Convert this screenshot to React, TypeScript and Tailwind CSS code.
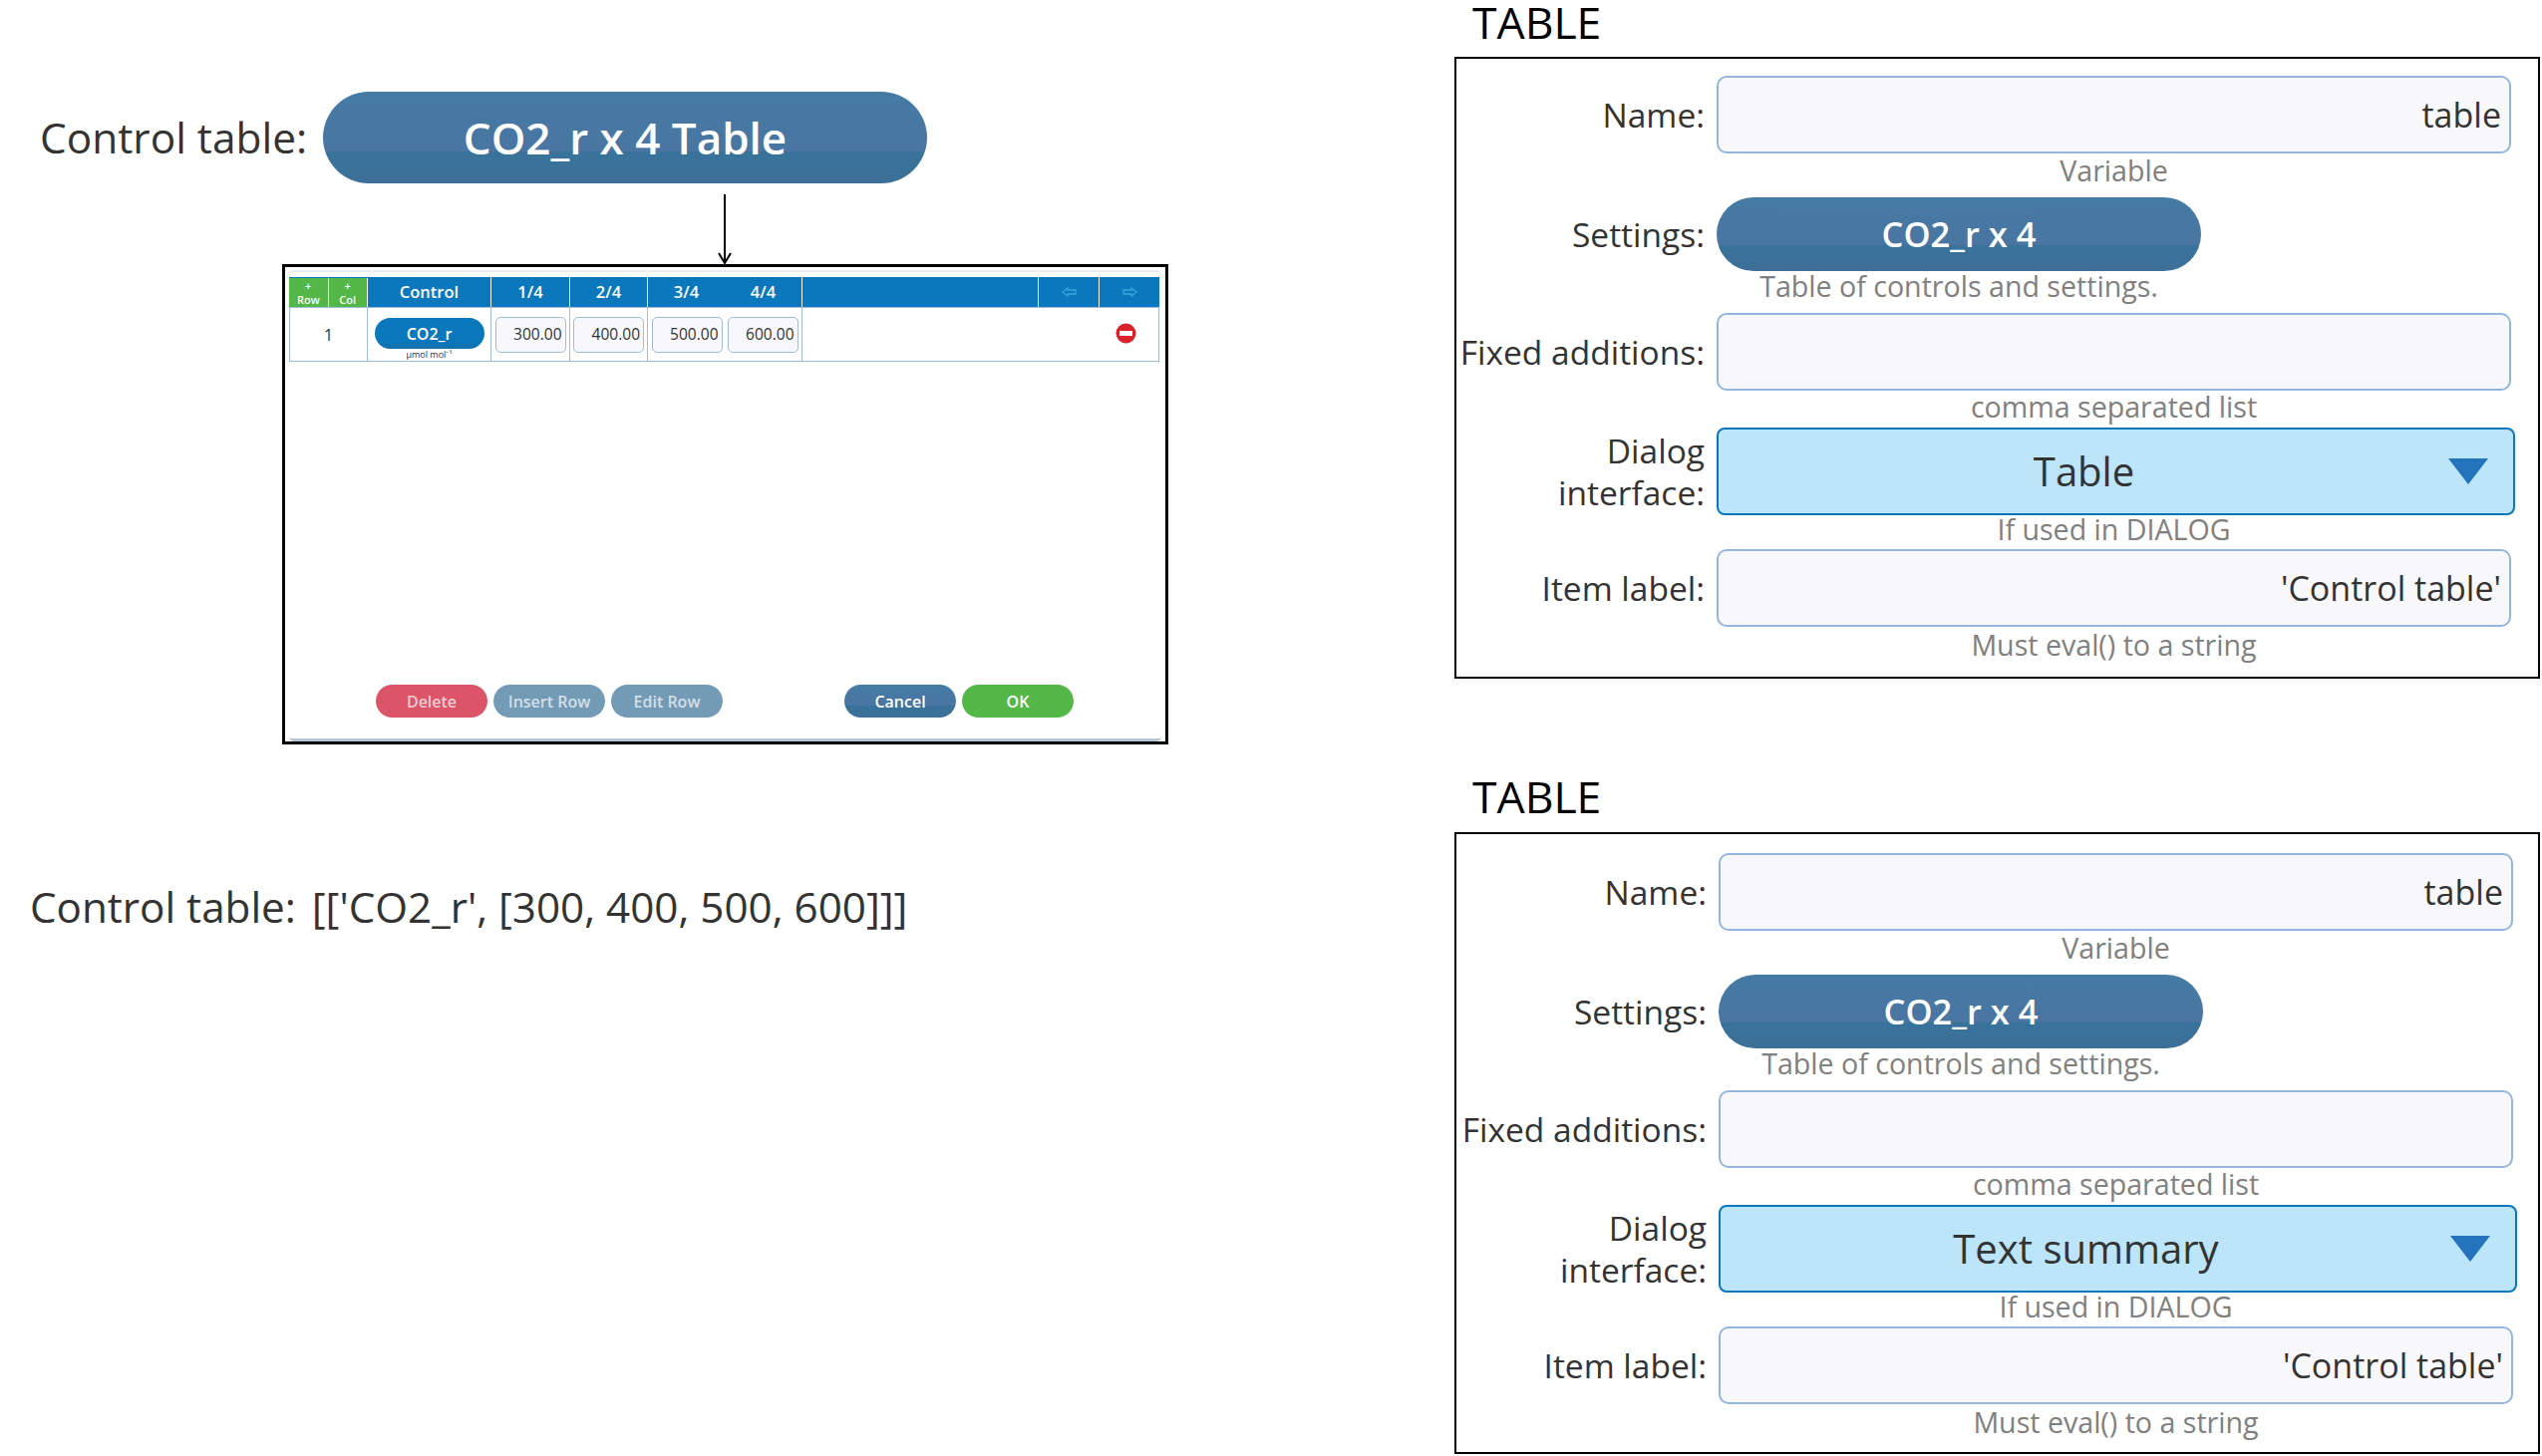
import React from 'react';

const steelPill = 'bg-[linear-gradient(#447ba4_0%,#4a75a2_65%,#38739b_65%,#3d6f98_100%)]';

const Hint: React.FC<{ text: string; className: string }> = ({ text, className }) => (
    <div className={`flex items-center justify-center text-[28.6px] leading-none text-[#808080] ${className}`}>
        {text}
    </div>
);

const FormRow: React.FC<{ label: React.ReactNode; children: React.ReactNode }> = ({ label, children }) => (
    <div className="flex items-center">
        <div className="w-[261px] shrink-0 pr-[12px] text-right text-[33.5px] font-medium leading-[42px] text-[#333]">{label}</div>
        {children}
    </div>
);

const TextField: React.FC<{ value?: string }> = ({ value }) => (
    <div className="flex h-[78px] w-[797px] items-center justify-end rounded-[10px] border-2 border-[#94b6dd] bg-[#f8f8fb] px-[8px] text-[34px] font-medium text-[#333]">
        {value}
    </div>
);

const TablePanel: React.FC<{ dialog: string; className: string }> = ({ dialog, className }) => (
    <section className={className}>
        <div className="flex h-[624px] w-[1089px] flex-col border-2 border-black bg-white">
            <FormRow label="Name:"><TextField value="table" /></FormRow>
            <div className="pl-[261px]"><Hint text="Variable" className="h-[44px] w-[797px] pb-[10px]" /></div>
            <FormRow label="Settings:">
                <div className={`flex h-[74px] w-[486px] items-center justify-center rounded-[37px] text-[34.5px] font-semibold text-white ${steelPill}`}>
                    CO2_r x 4
                </div>
            </FormRow>
            <div className="pl-[261px]"><Hint text="Table of controls and settings." className="h-[42px] w-[486px] pb-[12px]" /></div>
            <FormRow label="Fixed additions:"><TextField /></FormRow>
            <div className="pl-[261px]"><Hint text="comma separated list" className="h-[37px] w-[797px] pb-[4px]" /></div>
            <FormRow label={<>Dialog<br />interface:</>}>
                <div className="relative flex h-[88px] w-[801px] items-center justify-center rounded-[8px] border-2 border-[#0b78be] bg-[#bce5fa] pr-[64px] text-[40px] font-medium text-[#333]">
                    {dialog}
                    <svg className="absolute right-[25px] top-[29px]" width="40" height="26" viewBox="0 0 40 26">
                        <path d="M0 0H40L20 26Z" fill="#2474bd" />
                    </svg>
                </div>
            </FormRow>
            <div className="pl-[261px]"><Hint text="If used in DIALOG" className="h-[34px] w-[797px] pb-[6px]" /></div>
            <FormRow label="Item label:"><TextField value="'Control table'" /></FormRow>
            <div className="pl-[261px]"><Hint text="Must eval() to a string" className="h-[42px] w-[797px] pb-[6px]" /></div>
        </div>
    </section>
);

const columns = [
    { label: 'Control', width: 'w-[124px]' },
    { label: '1/4', width: 'w-[79px]' },
    { label: '2/4', width: 'w-[78px]' },
];

const values = ['300.00', '400.00', '500.00', '600.00'];

const DialogButton: React.FC<{ label: string; className: string }> = ({ label, className }) => (
    <button className={`h-[33px] w-[112px] rounded-[17px] text-[16px] font-semibold ${className}`}>{label}</button>
);

const ArrowGlyph: React.FC<{ flip?: boolean }> = ({ flip }) => (
    <svg width="15" height="10" viewBox="0 0 15 10" className={flip ? '-scale-x-100' : ''}>
        <path d="M1 5L6 1V3H14V7H6V9Z" fill="none" stroke="#36a5d8" strokeWidth="1.3" />
    </svg>
);

const ValueBox: React.FC<{ value: string }> = ({ value }) => (
    <div className="flex h-[36px] w-[71px] items-center justify-end rounded-[5px] border border-[#9dbcdf] bg-[#f8f8fb] pr-[3px] text-[15.5px]">
        {value}
    </div>
);

const DialogPreview: React.FC = () => (
    <div className="ml-[283px] h-[482px] w-[889px] border-[3px] border-black bg-white px-[4px] pt-[3px]">
        <div className="flex h-[473px] flex-col rounded-[5px] border-b-[3px] border-t-[2px] border-b-[#b5c5d3] border-t-[#e8edf3]">
            {/* Table header */}
            <div className="mt-[5px] flex h-[30px] w-[873px] text-white">
                <div className="flex w-[79px] gap-[1px] border-t border-[#0b78be] pr-[1px]">
                    {['Row', 'Col'].map((label) => (
                        <div key={label} className="flex flex-1 flex-col items-center justify-center bg-[#53b848] text-[11px] font-semibold leading-[14px]">
                            <span>+</span>
                            <span>{label}</span>
                        </div>
                    ))}
                </div>
                {columns.map((col) => (
                    <div key={col.label} className={`flex items-center justify-center border-r border-white bg-[#0b78be] text-[16.5px] font-semibold ${col.width}`}>
                        {col.label}
                    </div>
                ))}
                <div className="flex w-[155px] items-center border-r border-white bg-[#0b78be] text-[16.5px] font-semibold">
                    <span className="w-[77px] text-center">3/4</span>
                    <span className="w-[77px] text-center">4/4</span>
                </div>
                <div className="w-[237px] border-r border-white bg-[#0b78be]" />
                <div className="flex w-[61px] items-center justify-center border-r border-white bg-[#0b78be]"><ArrowGlyph /></div>
                <div className="flex w-[60px] items-center justify-center bg-[#0b78be]"><ArrowGlyph flip /></div>
            </div>

            {/* Single row */}
            <div className="flex h-[55px] w-[873px] border-x border-y border-[#9dbcdf] text-[#333]">
                <div className="flex w-[78px] items-center justify-center border-r border-[#9dbcdf] text-[16px]">1</div>
                <div className="flex w-[124px] flex-col items-center border-r border-[#9dbcdf] pt-[10px]">
                    <div className="flex h-[31px] w-[110px] items-center justify-center rounded-[16px] bg-[linear-gradient(#0b78be_0%,#0b78be_70%,#1270ad_100%)] text-[16px] font-semibold text-white">
                        CO2_r
                    </div>
                    <span className="text-[9px] leading-[12px]">µmol mol⁻¹</span>
                </div>
                <div className="flex w-[79px] items-center justify-center border-r border-[#9dbcdf]">
                    <ValueBox value={values[0]} />
                </div>
                <div className="flex w-[78px] items-center justify-center border-r border-[#9dbcdf]">
                    <ValueBox value={values[1]} />
                </div>
                <div className="flex w-[155px] items-center justify-center gap-[5px] border-r border-[#9dbcdf]">
                    <ValueBox value={values[2]} />
                    <ValueBox value={values[3]} />
                </div>
                <div className="flex flex-1 items-center justify-end pb-[2px] pr-[22px]">
                    <svg width="21" height="21" viewBox="0 0 21 21">
                        <circle cx="10.5" cy="10.5" r="10" fill="#d8232a" />
                        <rect x="4" y="8" width="13" height="5" fill="#fff" />
                    </svg>
                </div>
            </div>

            {/* Dialog buttons */}
            <div className="mt-[324px] flex pl-[87px]">
                <DialogButton label="Delete" className="bg-[#dc5468] text-[#eccdd3]" />
                <DialogButton label="Insert Row" className="ml-[6px] bg-[#749bb6] text-[#d3dfe7]" />
                <DialogButton label="Edit Row" className="ml-[6px] bg-[#749bb6] text-[#d3dfe7]" />
                <DialogButton label="Cancel" className={`ml-[122px] text-white ${steelPill}`} />
                <DialogButton label="OK" className="ml-[6px] bg-[#53b848] text-white" />
            </div>
        </div>
    </div>
);

const App: React.FC = () => {
    return (
        <div className="flex h-[1461px] w-[2550px] overflow-hidden bg-white font-['Open_Sans',sans-serif]">
            {/* Left side: dialog preview */}
            <div className="w-[1459px] shrink-0">
                <div className="mt-[92px] flex h-[92px] items-center pl-[40px] text-[42.4px] font-medium text-[#333]">
                    <span className="w-[284px]">Control table:</span>
                    <div className={`flex h-[92px] w-[606px] items-center justify-center rounded-[46px] text-[44px] font-semibold text-white ${steelPill}`}>
                        CO2_r x 4 Table
                    </div>
                </div>
                <div className="ml-[720px] mt-[11px] h-[70px]">
                    <svg width="14" height="70" viewBox="0 0 14 70">
                        <path d="M7 0V69M1 59L7 69L13 59" fill="none" stroke="#000" strokeWidth="2" />
                    </svg>
                </div>
                <DialogPreview />
                <p className="mt-[134px] pl-[30px] text-[42.2px] font-medium leading-[58px] text-[#333]">
                    Control table:<span className="ml-[16px]">[['CO2_r', [300, 400, 500, 600]]]</span>
                </p>
            </div>

            {/* Right side: the two form panels */}
            <div className="flex w-[1091px] shrink-0 flex-col">
                <h2 className="h-[57px] pl-[18px] text-[44.5px] leading-[44px] text-black">TABLE</h2>
                <TablePanel dialog="Table" className="[&>div]:pt-[17px]" />
                <h2 className="mt-[93px] h-[61px] pl-[18px] text-[44.5px] leading-[50px] text-black">TABLE</h2>
                <TablePanel dialog="Text summary" className="[&>div]:pt-[19px] [&>div>*]:translate-x-[2px]" />
            </div>
        </div>
    );
};

export default App;
